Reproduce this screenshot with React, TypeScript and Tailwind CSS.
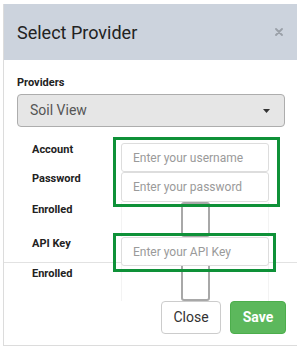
import React from "react";

const font = { fontFamily: "Roboto, 'Liberation Sans', sans-serif" };

function Label({ children, className = "" }: { children: React.ReactNode; className?: string }) {
  return (
    <div className={"w-[89px] shrink-0 text-[11px] leading-[13px] font-bold text-[#222] " + className}>
      {children}
    </div>
  );
}

function TextInput({ placeholder, h }: { placeholder: string; h: string }) {
  return (
    <input
      placeholder={placeholder}
      className={
        "w-[148px] " +
        h +
        " border border-[#ddd] rounded-[3px] bg-white pl-[11px] text-[12px] text-[#333] placeholder:text-[#9a9a9a] outline-none"
      }
      style={font}
    />
  );
}

function Toggle({ h }: { h: string }) {
  return (
    <div className={"w-[148px] " + h + " border-x border-[#f3f3f3] flex justify-center"}>
      <div className="w-[29px] h-full border-2 border-[#a8a8a8] rounded-[3px] bg-white" />
    </div>
  );
}

export default function App() {
  return (
    <div className="relative w-[297px] h-[346px] bg-white overflow-hidden" style={font}>
      <div className="ml-[3px] mt-[4px] h-[342px] border-l border-b border-[#dcdcdc] flex flex-col">
        <div className="h-[56px] bg-[#ccd3dd] flex items-center justify-between pl-[13px] pr-[14px]">
          <span className="text-[18px] text-[#222]">Select Provider</span>
          <svg width="8" height="8" viewBox="0 0 8 8">
            <path d="M1 1L7 7M7 1L1 7" stroke="#9aa0a8" strokeWidth="1.8" strokeLinecap="round" />
          </svg>
        </div>
        <div className="flex flex-col pt-[16px] pl-[13px] pr-[12px]">
          <div className="text-[11px] leading-[13px] font-bold text-[#222]">Providers</div>
          <div className="mt-[5px] h-[33px] bg-[#e6e6e6] border border-[#adadad] rounded-[4px] flex items-center justify-between pl-[12px] pr-[14px]">
            <span className="text-[14px] text-[#555]">Soil View</span>
            <svg width="7" height="4" viewBox="0 0 7 4">
              <path d="M0 0H7L3.5 4Z" fill="#333" />
            </svg>
          </div>
          <div className="mt-[16px] pl-[15px] flex flex-col">
            <div className="flex h-[29px]">
              <Label>Account</Label>
              <TextInput placeholder="Enter your username" h="h-[29px]" />
            </div>
            <div className="flex h-[30px]">
              <Label>Password</Label>
              <TextInput placeholder="Enter your password" h="h-[30px]" />
            </div>
            <div className="flex h-[35px]">
              <Label className="mt-[1px]">Enrolled</Label>
              <Toggle h="h-[35px]" />
            </div>
          </div>
        </div>
        <div className="flex h-[26px] border-b border-[#e2e2e2] pl-[28px]">
          <Label>API Key</Label>
          <div className="relative">
            <TextInput placeholder="Enter your API Key" h="h-[29px]" />
          </div>
        </div>
        <div className="flex h-[38px] pl-[28px]">
          <Label className="mt-[4px]">Enrolled</Label>
          <Toggle h="h-[38px]" />
        </div>
        <div className="flex justify-end gap-[9px] pr-[11px] h-[33px]">
          <button className="w-[60px] h-[33px] bg-white border border-[#ccc] rounded-[4px] text-[14px] text-[#333]">
            Close
          </button>
          <button className="w-[56px] h-[33px] bg-[#5cb85c] border border-[#4cae4c] rounded-[4px] text-[14px] font-bold text-white">
            Save
          </button>
        </div>
      </div>
      <div className="absolute left-[113px] top-[137px] w-[167px] h-[70px] border-[3px] border-[#0e9138] pointer-events-none" />
      <div className="absolute left-[113px] top-[233px] w-[163px] h-[39px] border-[3px] border-[#0e9138] pointer-events-none" />
    </div>
  );
}
